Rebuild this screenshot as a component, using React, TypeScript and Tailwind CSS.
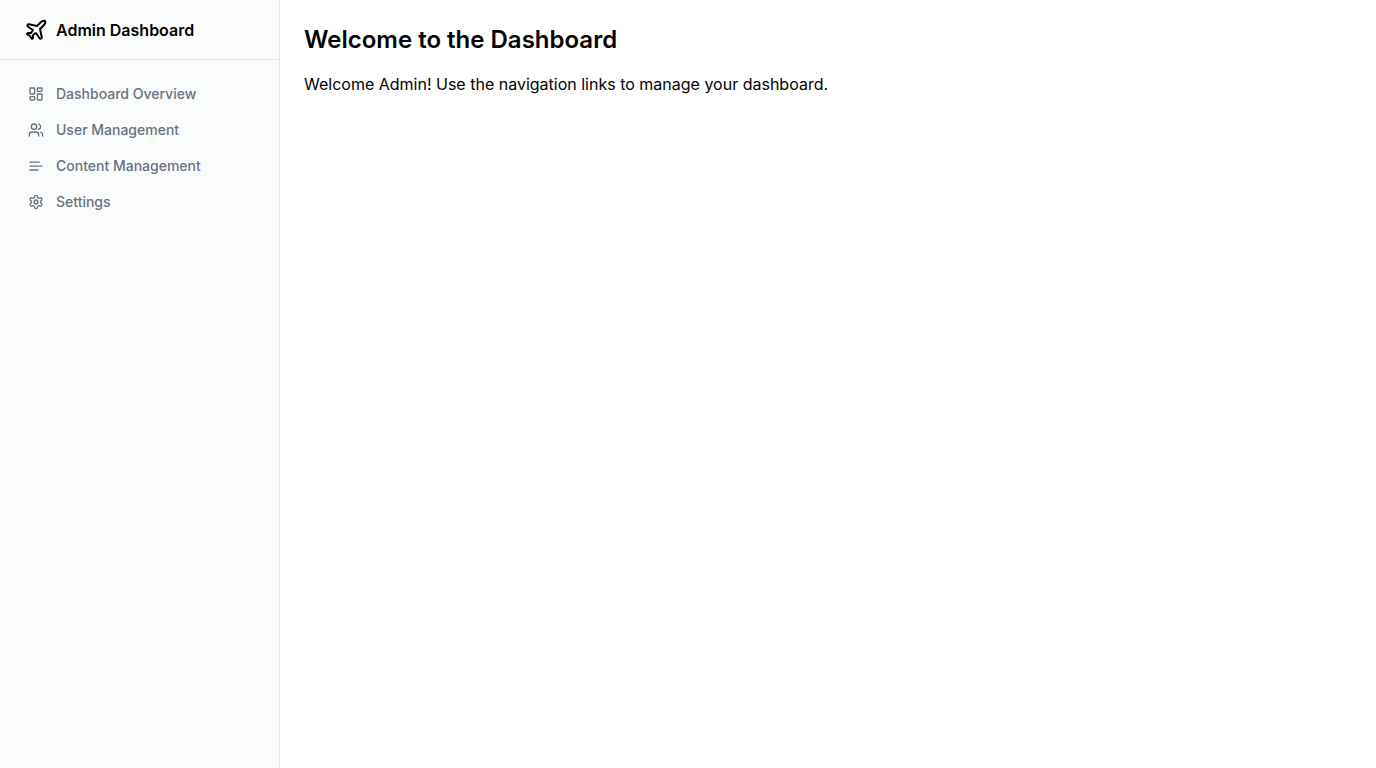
import type { ReactNode } from "react";
import { LayoutDashboard, Plane, Users } from "lucide-react";

function LineIcon({ children }: { children: ReactNode }) {
  return (
    <svg
      className="size-4"
      viewBox="0 0 24 24"
      fill="none"
      stroke="currentColor"
      strokeWidth="2"
      strokeLinecap="round"
      strokeLinejoin="round"
      aria-hidden="true"
    >
      {children}
    </svg>
  );
}

function TextIcon() {
  return (
    <LineIcon>
      <path d="M17 6.1H3" />
      <path d="M21 12.1H3" />
      <path d="M15.1 18H3" />
    </LineIcon>
  );
}

function SettingsIcon() {
  return (
    <LineIcon>
      <path d="M12.22 2h-.44a2 2 0 0 0-2 2v.18a2 2 0 0 1-1 1.73l-.43.25a2 2 0 0 1-2 0l-.15-.08a2 2 0 0 0-2.73.73l-.22.38a2 2 0 0 0 .73 2.73l.15.1a2 2 0 0 1 1 1.72v.51a2 2 0 0 1-1 1.74l-.15.09a2 2 0 0 0-.73 2.73l.22.38a2 2 0 0 0 2.73.73l.15-.08a2 2 0 0 1 2 0l.43.25a2 2 0 0 1 1 1.73V20a2 2 0 0 0 2 2h.44a2 2 0 0 0 2-2v-.18a2 2 0 0 1 1-1.73l.43-.25a2 2 0 0 1 2 0l.15.08a2 2 0 0 0 2.73-.73l.22-.39a2 2 0 0 0-.73-2.73l-.15-.08a2 2 0 0 1-1-1.74v-.5a2 2 0 0 1 1-1.74l.15-.09a2 2 0 0 0 .73-2.73l-.22-.38a2 2 0 0 0-2.73-.73l-.15.08a2 2 0 0 1-2 0l-.43-.25a2 2 0 0 1-1-1.73V4a2 2 0 0 0-2-2z" />
      <circle cx="12" cy="12" r="3" />
    </LineIcon>
  );
}

const links = [
  { label: "Dashboard Overview", icon: <LayoutDashboard className="size-4" /> },
  { label: "User Management", icon: <Users className="size-4" /> },
  { label: "Content Management", icon: <TextIcon /> },
  { label: "Settings", icon: <SettingsIcon /> },
];

export default function App() {
  return (
    <div className="grid min-h-screen grid-cols-[280px_1fr] bg-white font-['Inter',sans-serif] text-[#030303]">
      <aside className="flex flex-col gap-2 border-r border-[#e2e6e6] bg-[#fafcfb]">
        <div className="flex h-15 items-center border-b border-[#e2e6e6] px-6">
          <a href="#" className="flex items-center gap-2 font-semibold">
            <Plane className="size-6" />
            <span>Admin Dashboard</span>
          </a>
        </div>
        <nav className="grid items-start px-4 py-2 text-sm font-medium">
          {links.map(({ label, icon }) => (
            <a
              key={label}
              href="#"
              className="flex items-center gap-3 rounded-lg px-3 py-2 text-gray-500 hover:text-gray-900"
            >
              {icon}
              {label}
            </a>
          ))}
        </nav>
      </aside>
      <main className="flex flex-col gap-4 p-6">
        <h1 className="text-2xl font-semibold">Welcome to the Dashboard</h1>
        <p>Welcome Admin! Use the navigation links to manage your dashboard.</p>
      </main>
    </div>
  );
}
